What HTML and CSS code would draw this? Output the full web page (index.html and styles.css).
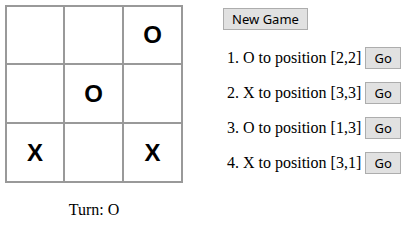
FILE: index.html
```html
<!DOCTYPE html>
<html lang="en">

<head>
    <meta charset="UTF-8">
    <meta name="viewport" content="width=device-width, initial-scale=1.0">
    <title>Tic Tac Toe</title>
    <link rel="stylesheet" href="styles.css">
</head>

<body>
    <section id="game">
        <div class="game-board">
            <div id="board">
                <div class="square"></div>
                <div class="square"></div>
                <div class="square">O</div>
                <div class="square"></div>
                <div class="square">O</div>
                <div class="square"></div>
                <div class="square">X</div>
                <div class="square"></div>
                <div class="square">X</div>
            </div>
            <div id="status">Turn: O</div>
        </div>

        <div class="game-info">
            <button id="new_game" class="game-btn">New Game</button>
            <ol id="moves">
                <li class="move"><span>1. O to position [2,2]</span><button class="game-btn move-btn">Go</button></li>
                <li class="move"><span>2. X to position [3,3]</span><button class="game-btn move-btn">Go</button></li>
                <li class="move"><span>3. O to position [1,3]</span><button class="game-btn move-btn">Go</button></li>
                <li class="move"><span>4. X to position [3,1]</span><button class="game-btn move-btn">Go</button></li>
            </ol>
        </div>
    </section>
</body>

</html>
```

FILE: styles.css
```css
body {
    margin: 0;
    font-family: "Liberation Serif", "Times New Roman", serif;
    font-size: 16px;
    color: #000;
    background-color: #fff;
}

#game {
    display: flex;
    padding: 5px;
}

#board {
    display: grid;
    grid-template-columns: 56px 57px 57px;
    grid-template-rows: 56px 57px 57px;
    gap: 2px;
    width: fit-content;
    border: 2px solid #999;
    background-color: #999;
}

.square {
    display: flex;
    justify-content: center;
    align-items: center;
    background-color: #fff;
    font-family: "Liberation Sans", Arial, sans-serif;
    font-size: 24px;
    font-weight: bold;
}

#status {
    margin-top: 18px;
    text-align: center;
}

.game-info {
    margin-left: 40px;
    padding-top: 3px;
}

.game-btn {
    height: 22px;
    margin: 0;
    padding: 0 10px;
    border: 1px solid #adadad;
    background-color: #e1e1e1;
    font-family: "Noto Sans", "Open Sans", sans-serif;
    font-size: 13px;
    color: #000;
    cursor: pointer;
}

#new_game {
    width: 85px;
    padding: 0;
}

#moves {
    list-style: none;
    margin: 17px 0 0;
    padding: 0 0 0 4px;
}

.move {
    display: flex;
    align-items: center;
    margin-bottom: 13px;
}

.move-btn {
    width: 36px;
    padding: 0;
    margin-left: 4px;
}
```
